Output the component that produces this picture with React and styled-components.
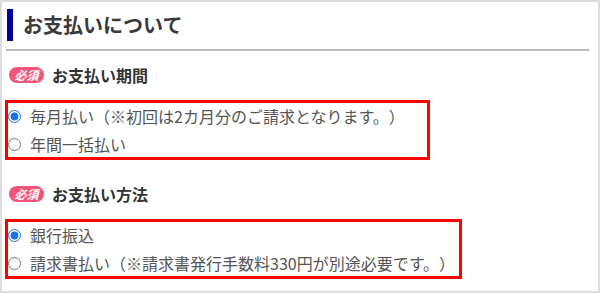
import * as React from "react"
import styled, { createGlobalStyle } from "styled-components"

const GlobalStyle = createGlobalStyle`
  html, body {
    margin: 0;
    padding: 0;
    background: #fff;
  }
  body {
    font-family: "Noto Sans CJK JP", "Noto Sans", sans-serif;
    text-spacing-trim: space-all;
  }
`

const Frame = styled.div`
  box-sizing: border-box;
  width: 600px;
  height: 293px;
  border: 2px solid #dcdcdc;
  padding: 7px 9px 0 3px;
  overflow: hidden;
`

const Heading = styled.h2`
  display: flex;
  align-items: center;
  height: 32px;
  margin: 0 0 0 2px;
  padding-left: 10px;
  border-left: 6px solid #0000a0;
  font-size: 20px;
  font-weight: bold;
  color: #3a3a3a;
  line-height: 1;
`

const Rule = styled.hr`
  margin: 8px 0 0 1px;
  border: 0;
  border-top: 2px solid #bdbdbd;
`

const Label = styled.div`
  display: flex;
  align-items: center;
  gap: 8px;
  height: 18px;
  margin: ${(p) => p.$top}px 0 0 4px;
  font-size: 16px;
  font-weight: bold;
  color: #333;
`

const Badge = styled.span`
  display: inline-flex;
  align-items: center;
  justify-content: center;
  width: 35px;
  height: 16px;
  border-radius: 8px;
  background: #f2557a;
  color: #fff;
  font-size: 12px;
  font-weight: bold;
  font-style: italic;
  line-height: 1;
`

const Box = styled.div`
  box-sizing: border-box;
  width: ${(p) => p.$width}px;
  margin: 16px 0 0 0;
  border: 3px solid #ff0000;
  display: flex;
  flex-direction: column;
  gap: 2px;
`

const Option = styled.label`
  display: flex;
  align-items: center;
  gap: 9px;
  height: 26px;
  font-size: 16px;
  color: #555;
  white-space: nowrap;

  input {
    width: 13px;
    height: 13px;
    margin: 0;
    accent-color: #1a73e8;
  }
`

function Section({ title, name, options, width, top }) {
  return (
    <>
      <Label $top={top}>
        <Badge>必須</Badge>
        {title}
      </Label>
      <Box $width={width}>
        {options.map((text, i) => (
          <Option key={text}>
            <input type="radio" name={name} defaultChecked={i === 0} />
            {text}
          </Option>
        ))}
      </Box>
    </>
  )
}

export default function App() {
  return (
    <>
      <GlobalStyle />
      <Frame>
        <Heading>お支払いについて</Heading>
        <Rule />
        <Section
          top={15}
          title="お支払い期間"
          name="period"
          width={425}
          options={["毎月払い（※初回は2カ月分のご請求となります。）", "年間一括払い"]}
        />
        <Section
          top={25}
          title="お支払い方法"
          name="method"
          width={457}
          options={["銀行振込", "請求書払い（※請求書発行手数料330円が別途必要です。）"]}
        />
      </Frame>
    </>
  )
}
